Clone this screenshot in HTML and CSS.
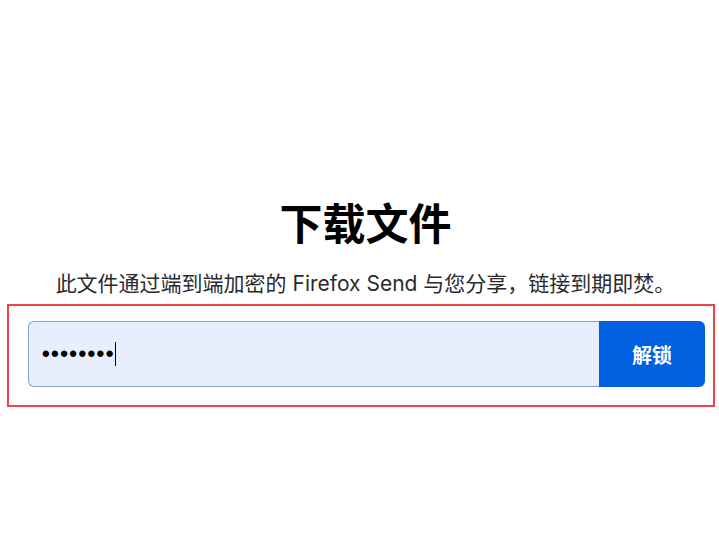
FILE: index.html
```html
<!DOCTYPE html>
<html lang="zh-CN">
<head>
  <meta charset="UTF-8">
  <meta name="viewport" content="width=device-width, initial-scale=1.0">
  <title>下载文件</title>
  <link rel="stylesheet" href="styles.css">
</head>
<body>
  <main class="page">
    <h1 class="title">下载文件</h1>
    <p class="subtitle">此文件通过端到端加密的 Firefox Send 与您分享，链接到期即焚。</p>

    <form class="unlock-form">
      <div class="pw-field">
        <span class="pw-dots">••••••••</span><span class="caret"></span>
      </div>
      <button type="button" class="unlock-btn">解锁</button>
    </form>
  </main>
</body>
</html>
```

FILE: styles.css
```css
body {
  margin: 0;
  background: #fff;
  font-family: "Inter", "Noto Sans CJK SC", sans-serif;
  color: #0c0c0d;
}
.page {
  display: flex;
  flex-direction: column;
  align-items: center;
  padding-top: 194px;
}
.title {
  margin: 0 0 0 12px;
  font-size: 43px;
  font-weight: 700;
  line-height: 60px;
  color: #000;
}
.subtitle {
  margin: 16px 0 0 12px;
  font-size: 21px;
  line-height: 28px;
  color: #2a2a2e;
}
.unlock-form {
  display: flex;
  align-self: stretch;
  margin: 6px 4px 0 7px;
  padding: 15px 8px 18px 19px;
  border: 2px solid #f0424a;
}
.pw-field {
  flex: 1;
  display: flex;
  align-items: center;
  height: 64px;
  padding-left: 13px;
  background: #e8effc;
  border: 1px solid #7fa2dd;
  border-right: none;
  border-radius: 6px 0 0 6px;
}
.pw-dots {
  font-family: "Liberation Sans", sans-serif;
  font-size: 22px;
  letter-spacing: 1.4px;
  color: #000;
  font-weight: 700;
}
.caret {
  width: 1px;
  height: 24px;
  background: #000;
}
.unlock-btn {
  width: 106px;
  height: 66px;
  border: none;
  border-radius: 0 6px 6px 0;
  background: #0060df;
  color: #fff;
  font-family: "Inter", "Noto Sans CJK SC", sans-serif;
  font-size: 20px;
  font-weight: 700;
  cursor: pointer;
}
```
